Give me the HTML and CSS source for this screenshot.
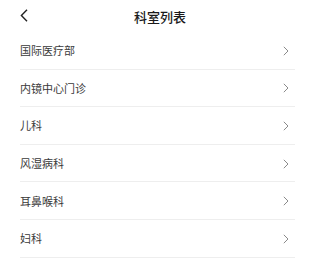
FILE: index.html
```html
<!DOCTYPE html>
<html lang="zh">
<head>
<meta charset="utf-8">
<link rel="stylesheet" href="styles.css">
</head>
<body>
<div class="page">
  <header class="nav">
    <span class="back">
      <svg width="8" height="13" viewBox="0 0 8 13"><path d="M7 0.8 L1.4 6.5 L7 12.2" fill="none" stroke="#222" stroke-width="1.4"/></svg>
    </span>
    <h1 class="title">科室列表</h1>
  </header>
  <ul class="list">
    <li class="row"><span class="name">国际医疗部</span><svg class="arrow" width="6" height="10" viewBox="0 0 6 10"><path d="M0.8 0.8 L5 5 L0.8 9.2" fill="none" stroke="#8a8a8a" stroke-width="1"/></svg></li>
    <li class="row"><span class="name">内镜中心门诊</span><svg class="arrow" width="6" height="10" viewBox="0 0 6 10"><path d="M0.8 0.8 L5 5 L0.8 9.2" fill="none" stroke="#8a8a8a" stroke-width="1"/></svg></li>
    <li class="row"><span class="name">儿科</span><svg class="arrow" width="6" height="10" viewBox="0 0 6 10"><path d="M0.8 0.8 L5 5 L0.8 9.2" fill="none" stroke="#8a8a8a" stroke-width="1"/></svg></li>
    <li class="row"><span class="name">风湿病科</span><svg class="arrow" width="6" height="10" viewBox="0 0 6 10"><path d="M0.8 0.8 L5 5 L0.8 9.2" fill="none" stroke="#8a8a8a" stroke-width="1"/></svg></li>
    <li class="row"><span class="name">耳鼻喉科</span><svg class="arrow" width="6" height="10" viewBox="0 0 6 10"><path d="M0.8 0.8 L5 5 L0.8 9.2" fill="none" stroke="#8a8a8a" stroke-width="1"/></svg></li>
    <li class="row"><span class="name">妇科</span><svg class="arrow" width="6" height="10" viewBox="0 0 6 10"><path d="M0.8 0.8 L5 5 L0.8 9.2" fill="none" stroke="#8a8a8a" stroke-width="1"/></svg></li>
  </ul>
</div>
</body>
</html>
```
FILE: styles.css
```css
* { box-sizing: border-box; }
html, body { margin: 0; padding: 0; background: #fff; }
body { font-family: "Noto Sans CJK SC", "Noto Sans", sans-serif; }
.page { width: 320px; height: 260px; overflow: hidden; }
.nav {
  position: relative;
  height: 32px;
  display: flex;
  align-items: center;
  justify-content: center;
}
.back {
  position: absolute;
  left: 20px;
  top: 9px;
  display: flex;
}
.title {
  margin: 0;
  font-size: 13px;
  font-weight: 500;
  color: #1a1a1a;
  line-height: 1;
  padding-top: 1px;
}
.list { list-style: none; margin: 0; padding: 0 25px 0 20px; }
.row {
  height: 37.6px;
  display: flex;
  align-items: center;
  justify-content: space-between;
  border-bottom: 1px solid #eeeeee;
  padding-right: 6px;
  padding-top: 1px;
}
.name { font-size: 11px; color: #3a3a3a; line-height: 1; }
.arrow { display: block; }
```
